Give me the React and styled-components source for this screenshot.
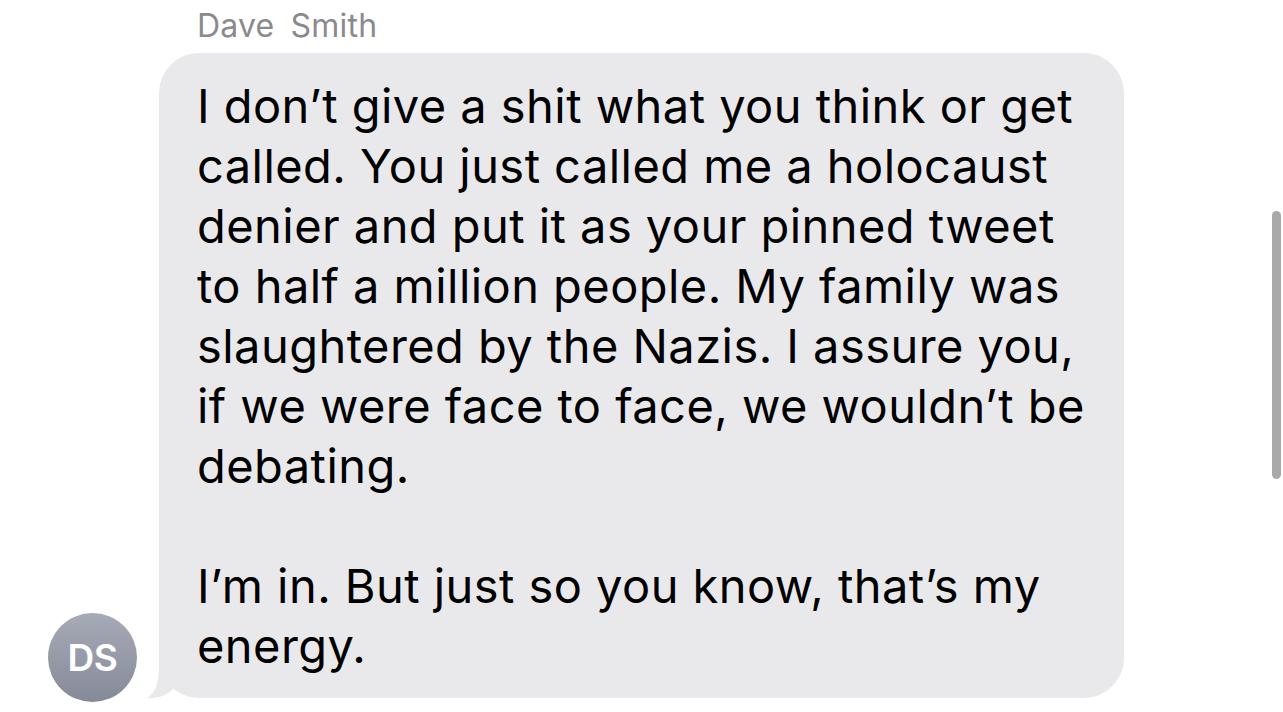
import React from "react";
import styled, { createGlobalStyle } from "styled-components";

const Global = createGlobalStyle`
  html, body { margin: 0; padding: 0; background: #ffffff; }
  body { font-family: Inter, "Noto Sans", "Liberation Sans", sans-serif; overflow: hidden; }
`;

const Screen = styled.div`
  position: relative;
  width: 1283px;
  height: 712px;
  overflow: hidden;
  background: #ffffff;
`;

const Thread = styled.div`
  display: flex;
  flex-direction: column;
  padding-top: 7px;
`;

const SenderName = styled.div`
  padding-left: 197px;
  font-size: 32px;
  line-height: 37px;
  color: #8a8a8e;
  letter-spacing: 0.2px;
  word-spacing: 7px;
`;

const MessageRow = styled.div`
  display: flex;
  align-items: flex-end;
  gap: 22px;
  padding-left: 48px;
  margin-top: 9px;
`;

const Avatar = styled.div`
  flex: none;
  width: 89px;
  height: 89px;
  border-radius: 50%;
  margin-bottom: -4px;
  background: linear-gradient(180deg, #a7abb8 0%, #858a98 100%);
  display: flex;
  align-items: center;
  justify-content: center;
  color: #ffffff;
  font-size: 37px;
  font-weight: 600;
  letter-spacing: -0.5px;
`;

const Bubble = styled.div`
  position: relative;
  width: 965px;
  box-sizing: border-box;
  padding: 23px 10px 22px 38px;
  background: #e9e9eb;
  border-radius: 40px;
  color: #000000;
  font-size: 47px;
  line-height: 60px;
  letter-spacing: 0.45px;
`;

const Tail = styled.svg`
  position: absolute;
  left: -12px;
  bottom: 0;
  width: 40px;
  height: 45px;
  overflow: visible;
`;

const Line = styled.div`
  white-space: pre;
  min-height: 60px;
`;

const ScrollThumb = styled.div`
  position: absolute;
  left: 1272px;
  top: 211px;
  width: 9px;
  height: 268px;
  border-radius: 5px;
  background: #a9a9a9;
`;

const lines = [
  "I don’t give a shit what you think or get",
  "called. You just called me a holocaust",
  "denier and put it as your pinned tweet",
  "to half a million people. My family was",
  "slaughtered by the Nazis. I assure you,",
  "if we were face to face, we wouldn’t be",
  "debating.",
  "",
  "I’m in. But just so you know, that’s my",
  "energy.",
];

export default function App() {
  return (
    <Screen>
      <Global />
      <Thread>
        <SenderName>Dave Smith</SenderName>
        <MessageRow>
          <Avatar>DS</Avatar>
          <Bubble>
            <Tail viewBox="0 0 40 45">
              <path
                d="M12,0 L12,14 C12,30 8,40 0,45 C10,46 20,43 28,34 L28,0 Z"
                fill="#e9e9eb"
              />
            </Tail>
            {lines.map((l, i) => (
              <Line key={i}>{l}</Line>
            ))}
          </Bubble>
        </MessageRow>
      </Thread>
      <ScrollThumb />
    </Screen>
  );
}
